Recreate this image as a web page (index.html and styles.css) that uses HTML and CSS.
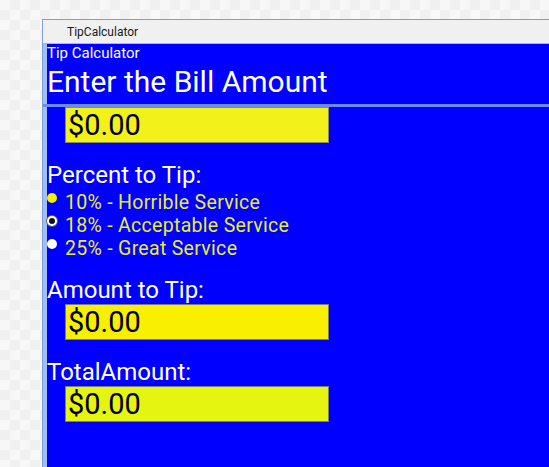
FILE: index.html
```html
<!DOCTYPE html>
<html>
<head>
<meta charset="utf-8">
<link rel="stylesheet" href="styles.css">
</head>
<body>
<div class="win">
  <div class="titlebar">TipCalculator</div>
  <div class="client">
    <div class="header">
      <div class="app-name">Tip Calculator</div>
      <div class="page-title">Enter the Bill Amount</div>
    </div>
    <div class="sep"></div>
    <div class="content">
      <div class="box box1">$0.00</div>
      <div class="label label-percent">Percent to Tip:</div>
      <div class="radios">
        <div class="radio"><span class="dot dot-yellow"></span><span class="rtext">10% - Horrible Service</span></div>
        <div class="radio"><span class="dot dot-checked"></span><span class="rtext">18% - Acceptable Service</span></div>
        <div class="radio"><span class="dot dot-white"></span><span class="rtext">25% - Great Service</span></div>
      </div>
      <div class="label label-amount">Amount to Tip:</div>
      <div class="box box2">$0.00</div>
      <div class="label label-total">TotalAmount:</div>
      <div class="box box3">$0.00</div>
    </div>
  </div>
</div>
</body>
</html>
```

FILE: styles.css
```css
html, body {
  margin: 0;
  padding: 0;
  height: 100%;
  overflow: hidden;
}
body {
  background-color: #f7f7f7;
  background-image: conic-gradient(#f0f0f0 25%, #f7f7f7 25% 50%, #f0f0f0 50% 75%, #f7f7f7 75%);
  background-size: 20px 20px;
  font-family: Roboto, "Open Sans", sans-serif;
}
.win {
  margin: 19px 0 0 42px;
  border-left: 1px solid #7c9fe0;
  border-top: 1px solid #7c9fe0;
  height: 460px;
  display: flex;
  flex-direction: column;
}
.titlebar {
  height: 24px;
  background: #f0f0f0;
  font-size: 12px;
  line-height: 24px;
  padding-left: 24px;
  color: #1a1a1a;
  border-bottom: 1px solid #9db8ea;
  box-sizing: border-box;
}
.client {
  flex: 1;
  background: #0000ff;
  border-left: 4px solid #a3bdec;
}
.header {
  height: 60px;
  color: #fff;
}
.app-name {
  font-size: 15px;
  line-height: 19px;
}
.page-title {
  font-size: 30px;
  line-height: 37px;
}
.sep {
  height: 3px;
  background: #6a8af7;
  margin-left: -4px;
}
.content {
  display: flex;
  flex-direction: column;
}
.box {
  margin-left: 18px;
  width: 264px;
  height: 36px;
  box-sizing: border-box;
  border: 1px solid #8a8a6a;
  font-size: 29px;
  line-height: 34px;
  padding-left: 2px;
  color: #000;
}
.box1 { background: #f2f21a; }
.box2 { background: #f8f000; border-color: #7a7a80; }
.box3 { background: #e6f510; border-color: #7a8080; }
.label {
  color: #fff;
  font-size: 24px;
  line-height: 28px;
}
.label-percent { margin-top: 18px; }
.label-amount { margin-top: 16px; }
.label-total { margin-top: 18px; }
.radios {
  display: flex;
  flex-direction: column;
  padding-top: 2px;
}
.radio {
  display: flex;
  align-items: center;
  height: 23px;
}
.dot {
  width: 10px;
  height: 10px;
  border-radius: 50%;
  box-sizing: border-box;
  margin-right: 8px;
  margin-top: -9px;
}
.dot-yellow { background: #f5f000; }
.dot-white { background: #ffffff; }
.dot-checked { background: #111; border: 2px solid #fff; box-shadow: 0 0 0 1px #666; }
.rtext {
  color: #e8ec30;
  font-size: 19.5px;
  line-height: 23px;
  letter-spacing: 0.3px;
}
```
